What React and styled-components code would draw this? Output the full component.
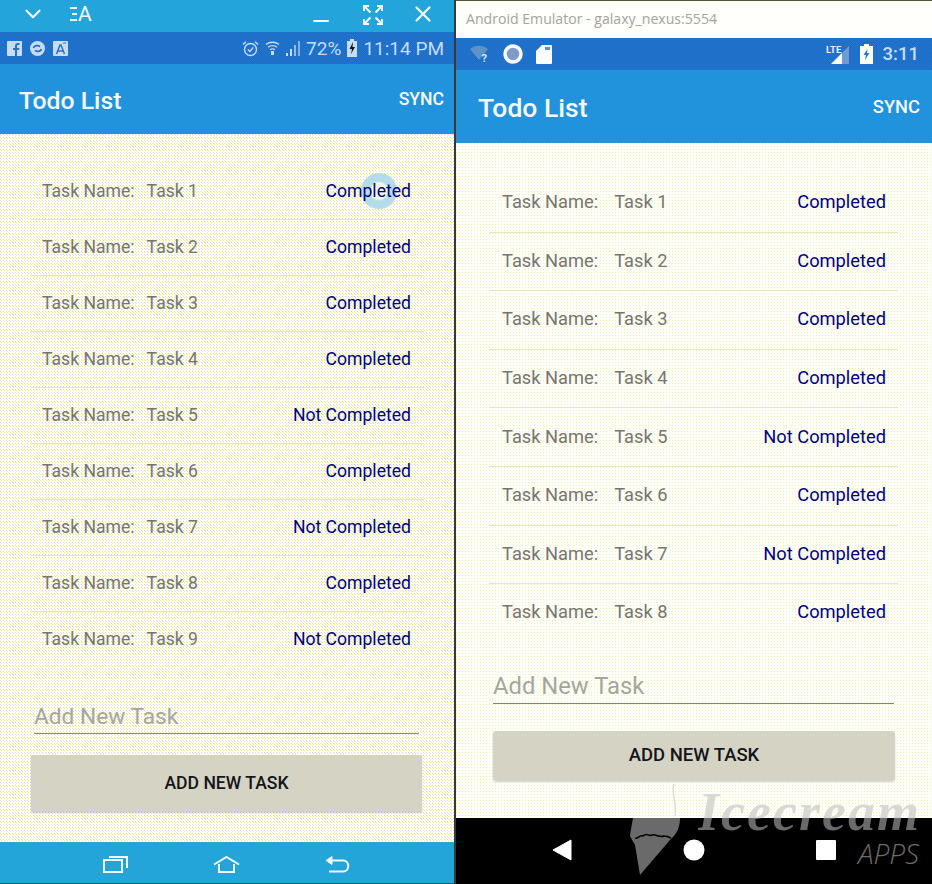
import styled, { createGlobalStyle } from "styled-components";
import { ChevronDown, X, Minus } from "lucide-react";

const GlobalStyle = createGlobalStyle`
  html, body {
    margin: 0;
    padding: 0;
    background: #2b2b2b;
    font-family: Roboto, "Liberation Sans", sans-serif;
  }
  * { box-sizing: border-box; }
`;

const checker = (a, b) => `repeating-conic-gradient(${a} 0 25%, ${b} 0 50%) 0 0 / 2px 2px`;

const leftSize = {
  width: 454,
  barHeight: 70,
  titleSize: 24.8,
  titleLeft: 19,
  titleDrop: 3,
  syncSize: 17.6,
  syncRight: 10,
  padTop: 30,
  padLeft: 30,
  padRight: 30,
  rowHeight: 56,
  rowLift: 2,
  rowPad: 12,
  rowRight: 13,
  textSize: 17.6,
  labelGap: 12,
  fieldTop: 30,
  fieldLeft: 4,
  fieldRight: 5,
  fieldSize: 22.7,
  fieldLine: "#8a8a70",
  buttonTop: 21,
  buttonLeft: 1,
  buttonRight: 2,
  buttonHeight: 56,
  buttonRadius: 1,
  buttonSize: 17.6,
  body: "#fffff2",
  dot: "#d4d4fc",
  spot: "#f6ee80",
};

const rightSize = {
  width: 476,
  barHeight: 73,
  titleSize: 26.5,
  titleLeft: 22,
  titleDrop: 2,
  syncSize: 18.3,
  syncRight: 12,
  padTop: 31,
  padLeft: 33,
  padRight: 34,
  rowHeight: 58.6,
  rowLift: 2,
  rowPad: 13,
  rowRight: 12,
  textSize: 18.3,
  labelGap: 16,
  fieldTop: 25,
  fieldLeft: 4,
  fieldRight: 4,
  fieldSize: 23.8,
  fieldLine: "#808090",
  buttonTop: 27,
  buttonLeft: 4,
  buttonRight: 3,
  buttonHeight: 49,
  buttonRadius: 3,
  buttonSize: 18.5,
  body: "#fffffa",
  dot: "#f3f0c0",
  spot: "#fffffa",
};

const Page = styled.div`
  width: 932px;
  height: 884px;
  display: flex;
  overflow: hidden;
  position: relative;
`;

const Phone = styled.div`
  width: ${(p) => p.$m.width}px;
  height: 884px;
  display: flex;
  flex-direction: column;
  flex: none;
`;

const Seam = styled.div`
  width: 2px;
  background: #3a3a30;
  flex: none;
`;

const WindowBar = styled.div`
  height: 32px;
  flex: none;
  background: ${checker("#20a8e0", "#28a0d4")};
  color: #f2f8fc;
  display: flex;
  align-items: center;
  padding: 0 20px 4px 20px;
`;

const WindowSpacer = styled.div`
  flex: 1;
`;

const TranslateTool = styled.div`
  margin-left: 24px;
  display: flex;
  align-items: center;
  gap: 1px;
  font-size: 21px;
  line-height: 1;
`;

const MinimizeIcon = styled(Minus)`
  margin: 14px 30px 0 0;
`;

const RestoreWrap = styled.span`
  display: flex;
  margin-top: 2px;
`;

const CloseIcon = styled(X)`
  margin: 0 -2px 0 27px;
`;

const TitleBar = styled.div`
  height: 38px;
  flex: none;
  background: #fffffc;
  border-top: 1px solid #55553a;
  color: #a3a39c;
  font-family: "Open Sans", sans-serif;
  font-size: 14.1px;
  display: flex;
  align-items: center;
  padding: 0 0 2px 10px;
`;

const StatusBar = styled.div`
  height: 32px;
  flex: none;
  background: ${checker("#1c6cc8", "#2176cc")};
  color: #c6dcf0;
  display: flex;
  align-items: center;
  padding: 0 ${(p) => p.$right}px 0 ${(p) => p.$left}px;
`;

const StatusGroup = styled.div`
  display: flex;
  align-items: center;
  gap: ${(p) => p.$gap}px;
  margin-left: ${(p) => (p.$end ? "auto" : "0")};
`;

const StatusText = styled.span`
  font-size: ${(p) => p.$size}px;
  font-weight: ${(p) => p.$weight || 400};
  line-height: 1;
  white-space: nowrap;
`;

const AppBar = styled.div`
  height: ${(p) => p.$m.barHeight}px;
  flex: none;
  background: ${checker("#1f8fdc", "#2496dc")};
  color: #f6fafc;
  display: flex;
  align-items: center;
  justify-content: space-between;
  padding: 0 ${(p) => p.$m.syncRight}px 0 ${(p) => p.$m.titleLeft}px;
`;

const AppTitle = styled.div`
  font-size: ${(p) => p.$m.titleSize}px;
  font-weight: 500;
  padding-top: ${(p) => p.$m.titleDrop}px;
`;

const SyncButton = styled.div`
  font-size: ${(p) => p.$m.syncSize}px;
  font-weight: 500;
`;

const Content = styled.div`
  flex: 1;
  min-height: 0;
  padding: ${(p) => p.$m.padTop}px ${(p) => p.$m.padRight}px 0 ${(p) => p.$m.padLeft}px;
  background:
    conic-gradient(at 1px 1px, transparent 75%, ${(p) => p.$m.dot} 0) 0 0 / 3px 3px,
    conic-gradient(at 1px 1px, transparent 75%, ${(p) => p.$m.spot} 0) 1px 1px / 3px 3px,
    ${(p) => p.$m.body};
  overflow: hidden;
`;

const TaskRow = styled.div`
  height: ${(p) => p.$m.rowHeight}px;
  display: flex;
  align-items: center;
  justify-content: space-between;
  padding: 0 ${(p) => p.$m.rowRight}px ${(p) => p.$m.rowLift}px ${(p) => p.$m.rowPad}px;
  border-bottom: 1px solid ${(p) => (p.$last ? "transparent" : "#e6e6c4")};
  font-size: ${(p) => p.$m.textSize}px;
`;

const TaskName = styled.div`
  display: flex;
  gap: ${(p) => p.$m.labelGap}px;
  color: #76766f;
`;

const TaskStatus = styled.div`
  position: relative;
  isolation: isolate;
  color: #00007c;
`;

const Ripple = styled.span`
  position: absolute;
  right: 14px;
  top: 50%;
  width: 36px;
  height: 36px;
  margin-top: -18px;
  border-radius: 50%;
  background: radial-gradient(circle, #f4f8e8 0 8px, #b4dcec 10px);
  z-index: -1;
`;

const Field = styled.div`
  margin: ${(p) => p.$m.fieldTop}px ${(p) => p.$m.fieldRight}px 0 ${(p) => p.$m.fieldLeft}px;
  height: 36px;
  padding-top: 1px;
  display: flex;
  align-items: center;
  border-bottom: 1px solid ${(p) => p.$m.fieldLine};
  color: #a6a69a;
  font-size: ${(p) => p.$m.fieldSize}px;
`;

const AddButton = styled.div`
  margin: ${(p) => p.$m.buttonTop}px ${(p) => p.$m.buttonRight}px 0 ${(p) => p.$m.buttonLeft}px;
  height: ${(p) => p.$m.buttonHeight}px;
  padding-bottom: 1px;
  border-radius: ${(p) => p.$m.buttonRadius}px;
  background: #d5d4c4;
  box-shadow: 0 2px 2px rgba(90, 90, 70, 0.28);
  color: #14141a;
  font-size: ${(p) => p.$m.buttonSize}px;
  font-weight: 500;
  display: flex;
  align-items: center;
  justify-content: center;
`;

const TealNav = styled.div`
  height: 42px;
  flex: none;
  background: ${checker("#20a8dc", "#26a2d4")};
  border-bottom: 1px solid #1c5a66;
  display: flex;
  align-items: center;
  padding: 3px 0 0 103px;
  gap: 85px;
`;

const BlackNav = styled.div`
  height: 66px;
  flex: none;
  background: #000;
  display: flex;
  align-items: center;
  padding: 0 96px 2px 96px;
  justify-content: space-between;
`;

const Watermark = styled.div`
  position: absolute;
  left: 630px;
  top: 782px;
  width: 300px;
  height: 100px;
  pointer-events: none;
`;

const ConeWrap = styled.div`
  position: absolute;
  left: 0;
  top: 0;
`;

const WatermarkName = styled.div`
  position: absolute;
  left: 68px;
  top: 5px;
  font-family: "Liberation Serif", serif;
  font-style: italic;
  font-weight: 700;
  font-size: 54px;
  line-height: 50px;
  letter-spacing: 2px;
  background: linear-gradient(#d8d8d4 0 31px, #6a6a6a 31px);
  -webkit-background-clip: text;
  background-clip: text;
  color: transparent;
`;

const WatermarkApps = styled.div`
  position: absolute;
  right: 11px;
  top: 58px;
  font-family: "Open Sans", sans-serif;
  font-style: italic;
  font-weight: 300;
  font-size: 28px;
  line-height: 26px;
  color: #6c6c64;
`;

const Facebook = () => (
  <svg width="15" height="15" viewBox="0 0 15 15">
    <rect width="15" height="15" rx="1" fill="#c6dcf0" />
    <path d="M8 15V9H6V7h2V5c0-2 1-3 3-3h1.500v2H11c-.7 0-1 .3-1 1v2h2.400L12 9h-2v6z" fill="#2a70c0" />
  </svg>
);

const SyncBadge = () => (
  <svg width="15" height="15" viewBox="0 0 15 15">
    <circle cx="7.500" cy="7.500" r="7.500" fill="#c6dcf0" />
    <path d="M3.500 7c.6-2.400 4.500-3.300 6.500-1.400M11.500 8c-.6 2.400-4.500 3.300-6.500 1.400" fill="none" stroke="#2a70c0" strokeWidth="1.800" />
  </svg>
);

const TranslateBadge = () => (
  <svg width="15" height="15" viewBox="0 0 15 15">
    <rect width="15" height="15" rx="1" fill="#c6dcf0" />
    <path d="M3.500 13 7 4h1l3.500 9M5 10h5" fill="none" stroke="#2a70c0" strokeWidth="1.500" />
    <path d="M10 2h3" stroke="#2a70c0" />
  </svg>
);

const Alarm = () => (
  <svg width="17" height="17" viewBox="0 0 17 17" fill="none" stroke="#c6dcf0">
    <circle cx="8.500" cy="9.500" r="6" strokeWidth="1.400" />
    <path d="M5.800 9.500 8 11.500l3.200-4" strokeWidth="1.300" />
    <path d="M1 4.500 4 1.800M16 4.500l-3-2.700" strokeWidth="1.500" />
  </svg>
);

const SamsungWifi = () => (
  <svg width="15" height="16" viewBox="0 0 15 16" fill="none" stroke="#c6dcf0" strokeWidth="1.300">
    <path d="M1 4.500c3.500-3 9.500-3 13 0M3 7.200c2.500-2 6.500-2 9 0M5 9.800c1.400-1 3.600-1 5 0" />
    <rect x="6" y="11" width="3" height="4" fill="#c6dcf0" stroke="none" />
  </svg>
);

const SignalBars = () => (
  <svg width="14" height="15" viewBox="0 0 14 15" fill="#c6dcf0">
    <rect x="0" y="12" width="2" height="3" />
    <rect x="4" y="8" width="2" height="7" />
    <rect x="8" y="4" width="2" height="11" opacity="0.7" />
    <rect x="12" y="0" width="2" height="15" opacity="0.6" />
  </svg>
);

const SamsungBattery = () => (
  <svg width="10" height="18" viewBox="0 0 10 18">
    <rect x="3" y="0" width="4" height="2" fill="#c6dcf0" />
    <rect x="0" y="2" width="10" height="16" fill="#c6dcf0" />
    <path d="M6 3 2.500 10H5l-1 5 4-7H5.500z" fill="#10101c" />
  </svg>
);

const RestoreArrows = () => (
  <svg width="20" height="20" viewBox="0 0 20 20" fill="none" stroke="#f2f8fc" strokeWidth="2">
    <path d="M2 2l5.500 5.500M18 2l-5.500 5.500M2 18l5.500-5.500M18 18l-5.500-5.500" />
    <path d="M1 6V1h5M14 1h5v5M1 14v5h5M19 14v5h-5" strokeWidth="1.800" />
  </svg>
);

const MenuDashes = () => (
  <svg width="7" height="16" viewBox="0 0 7 16" fill="#f2f8fc">
    <rect width="7" height="2" y="1" />
    <rect width="5" height="2" y="7" x="2" />
    <rect width="7" height="2" y="13" />
  </svg>
);

const EmulatorWifi = () => (
  <svg width="20" height="20" viewBox="0 0 20 20">
    <path d="M0 5c5-4.500 13-4.500 18 0L9 16z" fill="#5f93c8" />
    <text x="11.500" y="18" fontSize="11" fontWeight="700" fontFamily="Roboto, sans-serif" fill="#dce8f4">?</text>
  </svg>
);

const EmulatorDisc = () => (
  <svg width="20" height="20" viewBox="0 0 20 20">
    <circle cx="10" cy="10" r="8" fill="#7f9cc8" stroke="#f8fafc" strokeWidth="3.500" />
  </svg>
);

const SdCard = () => (
  <svg width="16" height="19" viewBox="0 0 16 19">
    <path d="M6 0h9a1 1 0 0 1 1 1v17a1 1 0 0 1-1 1H1a1 1 0 0 1-1-1V6z" fill="#fafcfc" />
    <path d="M9 2h5v3H9z" fill="#5f8ec8" />
  </svg>
);

const LteSignal = () => (
  <svg width="24" height="20" viewBox="0 0 24 20">
    <text x="0" y="9" fontSize="9.500" fontWeight="700" fontFamily="Roboto, sans-serif" fill="#e8f0f8">LTE</text>
    <path d="M23 2v18H5z" fill="#6f9cd0" />
    <path d="M16 9v11H5z" fill="#fafcfc" />
  </svg>
);

const EmulatorBattery = () => (
  <svg width="13" height="20" viewBox="0 0 13 20">
    <path d="M4 0h5v2h4v18H0V2h4z" fill="#fafcf4" />
    <path d="M7.500 5 3.500 11H6l-1 5 4.500-7H7z" fill="#2a78cc" />
  </svg>
);

const Recents = () => (
  <svg width="25" height="18" viewBox="0 0 25 18" fill="none" stroke="#f4fafc" strokeWidth="2">
    <rect x="1" y="5" width="18" height="12" />
    <path d="M6 2h18v11" />
  </svg>
);

const Home = () => (
  <svg width="27" height="17" viewBox="0 0 27 17" fill="none" stroke="#f4fafc" strokeWidth="2">
    <path d="M1 8.500 13.500 1 26 8.500M6 8v8h15V8" />
  </svg>
);

const Back = () => (
  <svg width="25" height="17" viewBox="0 0 25 17" fill="none" stroke="#f4fafc" strokeWidth="2">
    <path d="M2 4.500h16c7 0 7 11 0 11H4" />
    <path d="M7 .500 1 4.500l6 4z" fill="#f4fafc" strokeWidth="1" />
  </svg>
);

const NavBack = () => (
  <svg width="20" height="22" viewBox="0 0 20 22">
    <path d="M19 1v20L1 11z" fill="#fff" stroke="#fff" strokeLinejoin="round" />
  </svg>
);

const NavHome = () => (
  <svg width="22" height="22" viewBox="0 0 22 22">
    <circle cx="11" cy="11" r="10.500" fill="#fff" />
  </svg>
);

const NavSquare = () => (
  <svg width="20" height="20" viewBox="0 0 20 20">
    <rect width="20" height="20" rx="1" fill="#fff" />
  </svg>
);

const Cone = () => (
  <svg width="52" height="96" viewBox="0 0 52 96">
    <path d="M44 2c-3 10 3 18 1 32" fill="none" stroke="#dcdcd8" strokeWidth="1.500" />
    <path d="M3 36h47c0 9-3 16-10 22L10 93 5 63 0 54c1-8 2-12 3-18z" fill="#6a6a6a" />
    <path d="M5 56c3 2 4-4 8-2 4-4 5 1 9-1 4-1 8 3 12 1 3 0 5 1 7 2" fill="none" stroke="#000" strokeWidth="1.500" />
  </svg>
);

const leftTasks = [
  { name: "Task 1", done: true, ripple: true },
  { name: "Task 2", done: true },
  { name: "Task 3", done: true },
  { name: "Task 4", done: true },
  { name: "Task 5", done: false },
  { name: "Task 6", done: true },
  { name: "Task 7", done: false },
  { name: "Task 8", done: true },
  { name: "Task 9", done: false },
];

const rightTasks = leftTasks.slice(0, 8).map((t) => ({ name: t.name, done: t.done }));

const TodoScreen = ({ m, tasks }) => (
  <>
    <AppBar $m={m}>
      <AppTitle $m={m}>Todo List</AppTitle>
      <SyncButton $m={m}>SYNC</SyncButton>
    </AppBar>
    <Content $m={m}>
      {tasks.map((task, i) => (
        <TaskRow key={task.name} $m={m} $last={i === tasks.length - 1}>
          <TaskName $m={m}>
            <span>Task Name:</span>
            <span>{task.name}</span>
          </TaskName>
          <TaskStatus>
            {task.ripple && <Ripple />}
            {task.done ? "Completed" : "Not Completed"}
          </TaskStatus>
        </TaskRow>
      ))}
      <Field $m={m}>Add New Task</Field>
      <AddButton $m={m}>ADD NEW TASK</AddButton>
    </Content>
  </>
);

const App = () => (
  <Page>
    <GlobalStyle />
    <Phone $m={leftSize}>
      <WindowBar>
        <ChevronDown size={26} strokeWidth={2} />
        <TranslateTool>
          <MenuDashes />
          <span>A</span>
        </TranslateTool>
        <WindowSpacer />
        <MinimizeIcon size={24} strokeWidth={2} />
        <RestoreWrap>
          <RestoreArrows />
        </RestoreWrap>
        <CloseIcon size={26} strokeWidth={2} />
      </WindowBar>
      <StatusBar $left={7} $right={10}>
        <StatusGroup $gap={8}>
          <Facebook />
          <SyncBadge />
          <TranslateBadge />
        </StatusGroup>
        <StatusGroup $gap={6} $end>
          <Alarm />
          <SamsungWifi />
          <SignalBars />
          <StatusText $size={19}>72%</StatusText>
          <SamsungBattery />
          <StatusText $size={19}>11:14 PM</StatusText>
        </StatusGroup>
      </StatusBar>
      <TodoScreen m={leftSize} tasks={leftTasks} />
      <TealNav>
        <Recents />
        <Home />
        <Back />
      </TealNav>
    </Phone>
    <Seam />
    <Phone $m={rightSize}>
      <TitleBar>Android Emulator - galaxy_nexus:5554</TitleBar>
      <StatusBar $left={14} $right={13}>
        <StatusGroup $gap={13}>
          <EmulatorWifi />
          <EmulatorDisc />
          <SdCard />
        </StatusGroup>
        <StatusGroup $gap={10} $end>
          <LteSignal />
          <EmulatorBattery />
          <StatusText $size={18.5} $weight={500}>3:11</StatusText>
        </StatusGroup>
      </StatusBar>
      <TodoScreen m={rightSize} tasks={rightTasks} />
      <BlackNav>
        <NavBack />
        <NavHome />
        <NavSquare />
      </BlackNav>
    </Phone>
    <Watermark>
      <ConeWrap>
        <Cone />
      </ConeWrap>
      <WatermarkName>Icecream</WatermarkName>
      <WatermarkApps>APPS</WatermarkApps>
    </Watermark>
  </Page>
);

export default App;
